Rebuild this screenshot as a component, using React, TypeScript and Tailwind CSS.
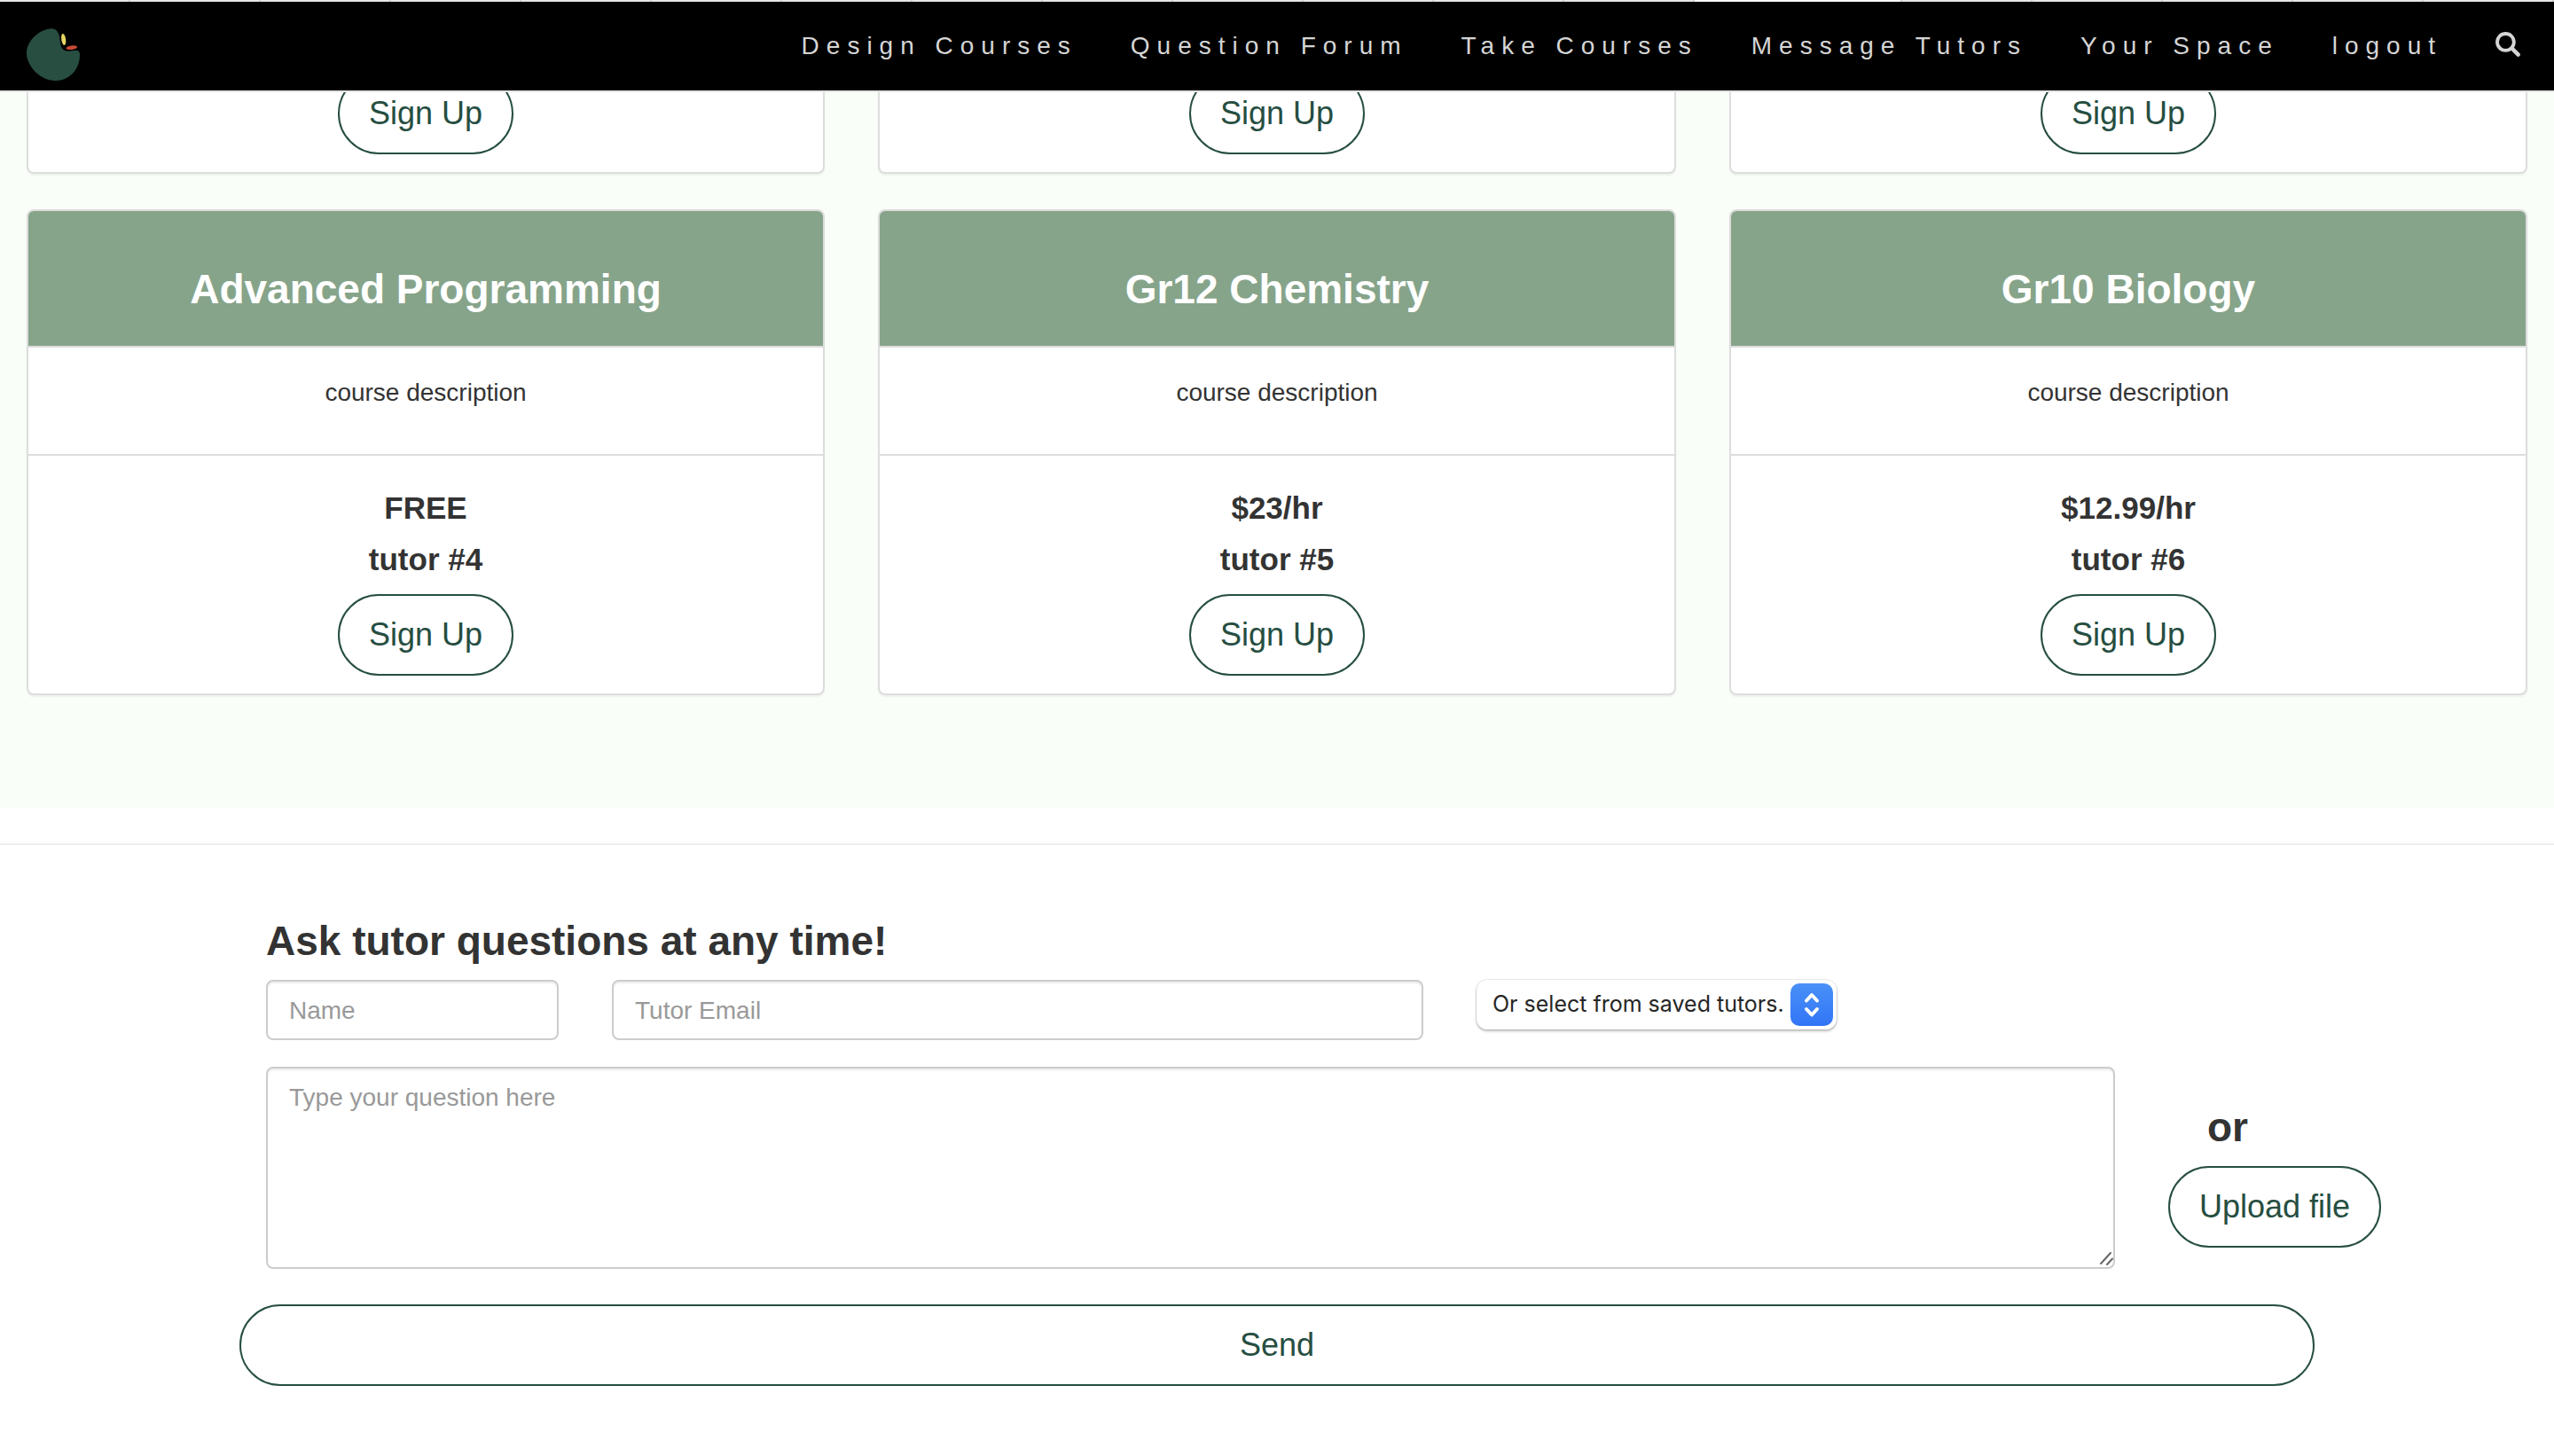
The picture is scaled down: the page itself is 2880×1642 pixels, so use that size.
import React from "react";
import clsx from "clsx";

type Course = {
  title: string;
  price: string;
  tutor: string;
};

const NAV_LINKS = ["Design Courses", "Question Forum", "Take Courses", "Message Tutors", "Your Space", "logout"];

const COURSES: Course[] = [
  { title: "Advanced Programming", price: "FREE", tutor: "tutor #4" },
  { title: "Gr12 Chemistry", price: "$23/hr", tutor: "tutor #5" },
  { title: "Gr10 Biology", price: "$12.99/hr", tutor: "tutor #6" },
];

// segments of the thin strip above the navbar
const STRIP_COUNT = 19;
const STRIP_ACTIVE = 13;

const PillButton: React.FC<{ children: React.ReactNode; className?: string }> = ({ children, className }) => (
  <button
    type="button"
    className={clsx(
      "shrink-0 rounded-full border-2 border-[#264e41] bg-white px-[33px] py-5 text-4xl leading-[48px] whitespace-nowrap text-[#264e41]",
      className
    )}
  >
    {children}
  </button>
);

const Logo = () => (
  <svg viewBox="0 0 60 60" className="h-[60px] w-[60px]" aria-hidden="true">
    <path
      d="M28 0.3C33.5 0.2 36.2 4.5 37.2 10C38 15 37.8 19.5 40.5 23C44 27.5 50 24.9 55.5 24.7C58.5 24.6 60 26.500 60 30C60 46 48.500 59 32.500 59C15.500 59 0 42.500 0 28C0 13.500 15.500 0.500 28 0.300Z"
      fill="#284e41"
    />
    <ellipse cx="41.700" cy="12.500" rx="2.500" ry="6.500" fill="#e6d563" transform="rotate(-8 41.700 12.500)" />
    <ellipse cx="50.700" cy="21.700" rx="6.300" ry="2.300" fill="#c94a35" transform="rotate(-7 50.700 21.700)" />
  </svg>
);

const SearchIcon = () => (
  <svg viewBox="0 0 28 28" className="h-7 w-7" fill="none" stroke="currentColor" aria-hidden="true">
    <circle cx="11.400" cy="11.400" r="9.400" strokeWidth="3.800" />
    <path d="M18.500 18.500L25.600 25.600" strokeWidth="4.500" strokeLinecap="round" />
  </svg>
);

const Header = () => (
  <header className="border-b-2 border-b-[#e5e5e5] bg-black">
    <div className="flex h-0.5 bg-[#e4e6e8]">
      {Array.from({ length: STRIP_COUNT }, (_, i) => (
        <span
          key={i}
          className={clsx("border-r-2 border-[#cfd1d3]", i === STRIP_ACTIVE ? "flex-[1.6] bg-[#fafafa]" : "flex-1")}
        />
      ))}
    </div>
    <nav className="flex h-[100px] items-center justify-between pl-[30px] text-[28px] leading-10 tracking-[8px] text-[#d5d5d5]">
      <a href="#" aria-label="Home" className="pt-5">
        <Logo />
      </a>
      <ul className="flex items-center">
        {NAV_LINKS.map((label) => (
          <li key={label}>
            <a href="#" className="block px-[30px] py-[30px]">{label}</a>
          </li>
        ))}
        <li>
          <a href="#" aria-label="Search" className="block pt-[34px] pr-[38px] pb-[38px] pl-[30px]">
            <SearchIcon />
          </a>
        </li>
      </ul>
    </nav>
  </header>
);

const CourseCard: React.FC<{ course: Course }> = ({ course }) => (
  <article className="overflow-hidden rounded-lg border-2 border-[#ddd] bg-white text-center shadow-[0_2px_2px_rgba(0,0,0,0.05)]">
    <h3 className="border-b-2 border-[#ddd] bg-[#86a48a] px-[30px] pt-[62px] pb-[38px] text-[46px] leading-[52px] font-bold text-white">
      {course.title}
    </h3>
    <p className="px-[30px] pt-[31px] pb-[49px] text-[28px] leading-10">course description</p>
    <div className="border-t-2 border-[#ddd] px-[30px] pt-[30px] pb-5">
      <h4 className="text-[35px] leading-[58px] font-bold">{course.price}</h4>
      <h4 className="text-[35px] leading-[58px] font-bold">{course.tutor}</h4>
      <PillButton className="mt-2.5">Sign Up</PillButton>
    </div>
  </article>
);

const fieldClass =
  "block w-full rounded-lg border-2 border-[#ccc] bg-white px-6 pt-[13px] pb-[11px] text-[28px] leading-10 shadow-[inset_0_2px_2px_rgba(0,0,0,0.075)] placeholder:text-[#999] placeholder:opacity-100";

const TutorSelect = () => (
  <div className="relative w-[406px]">
    <select
      aria-label="Saved tutors"
      className="block h-14 w-full appearance-none rounded-xl bg-white pl-[18px] font-['Inter',sans-serif] text-[25px] text-[#262626] shadow-[0_0_0_1px_rgba(0,0,0,0.08),0_2px_3px_rgba(0,0,0,0.25)]"
    >
      <option>Or select from saved tutors.</option>
    </select>
    <span className="pointer-events-none absolute top-1 right-1 h-12 w-12 rounded-[10px] bg-linear-to-b from-[#4a90f7] to-[#3175f6]">
      <svg viewBox="0 0 48 48" fill="none" stroke="#fff" strokeWidth="4" strokeLinecap="round" strokeLinejoin="round">
        <path d="M18 19.500L24 13L30 19.500M18 29L24 35.500L30 29" />
      </svg>
    </span>
  </div>
);

const QuestionForm = () => (
  <form className="mx-auto w-full max-w-[2340px] pt-[82px]">
    <h3 className="px-[30px] text-[46px] leading-[52px] font-bold">Ask tutor questions at any time!</h3>
    <div className="mt-[18px] grid grid-cols-12">
      <div className="col-span-2 px-[30px]">
        <input type="text" aria-label="Name" placeholder="Name" className={clsx(fieldClass, "h-[68px]")} />
      </div>
      <div className="col-span-5 px-[30px]">
        <input type="email" aria-label="Tutor Email" placeholder="Tutor Email" className={clsx(fieldClass, "h-[68px]")} />
      </div>
      <div className="col-span-5 px-[30px]">
        <TutorSelect />
      </div>
    </div>
    <div className="mt-[30px] grid grid-cols-12">
      <div className="col-span-11 px-[30px]">
        <div className="relative">
          <textarea
            rows={5}
            aria-label="Question"
            placeholder="Type your question here"
            className={clsx(fieldClass, "resize-none")}
          />
          <svg
            viewBox="0 0 16 16"
            className="pointer-events-none absolute right-0.5 bottom-1 h-4 w-4"
            stroke="#666"
            strokeWidth="2"
            strokeLinecap="round"
            aria-hidden="true"
          >
            <path d="M2 14L13 2M9 15L15 8.500" />
          </svg>
        </div>
      </div>
      <div className="flex flex-col items-start pt-[42px] pl-[30px]">
        <span className="pl-11 text-[46px] leading-[52px] font-bold">or</span>
        <PillButton className="mt-[18px]">Upload file</PillButton>
      </div>
    </div>
    <PillButton className="mt-10 w-full">Send</PillButton>
  </form>
);

export default function App() {
  return (
    <div className="overflow-hidden bg-white font-['Liberation_Sans',Arial,sans-serif] text-[#333]">
      <Header />
      <main>
        <section className="bg-[#f9fff8] px-[30px] pb-[127px]">
          {/* tail of the previous row, tucked under the navbar */}
          <div className="grid grid-cols-3 gap-[60px]">
            {["tutor-1", "tutor-2", "tutor-3"].map((id) => (
              <article
                key={id}
                className="flex h-[92px] items-end justify-center overflow-hidden rounded-b-lg border-2 border-t-0 border-[#ddd] bg-white pb-5 shadow-[0_2px_2px_rgba(0,0,0,0.05)]"
              >
                <PillButton>Sign Up</PillButton>
              </article>
            ))}
          </div>
          <div className="mt-10 grid grid-cols-3 gap-[60px]">
            {COURSES.map((course) => (
              <CourseCard key={course.title} course={course} />
            ))}
          </div>
        </section>
        <hr className="mt-10 border-t-2 border-[#eee]" />
        <QuestionForm />
      </main>
    </div>
  );
}
